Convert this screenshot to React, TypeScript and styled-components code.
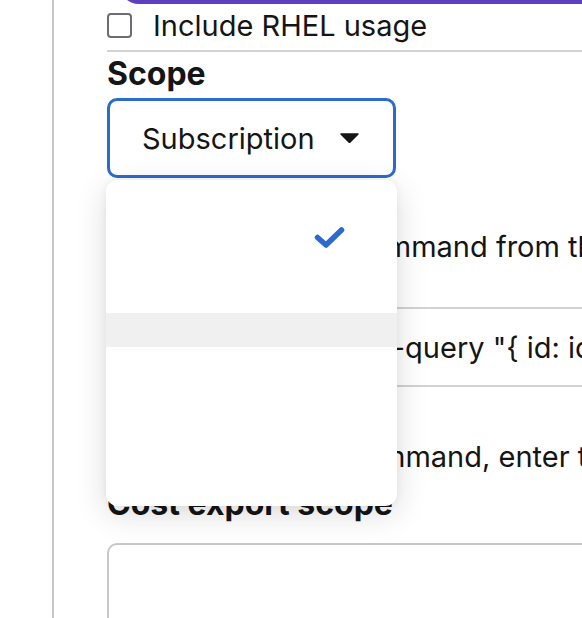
import React from 'react';
import styled, { createGlobalStyle } from 'styled-components';

const GlobalStyle = createGlobalStyle`
  html, body {
    margin: 0;
    padding: 0;
    background: #fff;
  }
  body {
    font-family: Inter, "Noto Sans", sans-serif;
    color: #151515;
    overflow: hidden;
  }
`;

const Page = styled.div`
  display: flex;
  height: 618px;
  overflow: hidden;
  background: #fff;
`;

const Rail = styled.div`
  flex: none;
  width: 52px;
  border-right: 2px solid #c7c7c7;
`;

const Main = styled.div`
  flex: 1;
  min-width: 0;
  padding-left: 53px;
`;

const Banner = styled.div`
  height: 24px;
  margin: -20px -40px 0 12px;
  background: #5e40be;
  border-radius: 0 0 0 20px;
`;

const CheckRow = styled.label`
  display: flex;
  align-items: center;
  gap: 21px;
  height: 43px;
  font-size: 29px;
  white-space: nowrap;
`;

const CheckBox = styled.span`
  box-sizing: border-box;
  width: 25px;
  height: 25px;
  border: 2px solid #6a6e73;
  border-radius: 4px;
  background: #fff;
`;

const Divider = styled.div`
  height: 2px;
  margin: 3px -40px 0 0;
  background: #d2d2d2;
`;

const Title = styled.h3<{ $top?: number }>`
  margin: ${(p) => p.$top ?? 0}px 0 0;
  font-size: 32px;
  font-weight: 700;
  line-height: 44px;
  white-space: nowrap;
`;

const SelectWrap = styled.div`
  position: relative;
  width: 289px;
  margin-top: 2px;
`;

const Toggle = styled.button`
  box-sizing: border-box;
  display: flex;
  align-items: center;
  gap: 25px;
  width: 289px;
  height: 80px;
  padding: 0 0 0 32px;
  border: 3px solid #2b6bd0;
  border-radius: 10px;
  background: #fff;
  color: #151515;
  font-family: inherit;
  font-size: 29px;
`;

const Menu = styled.ul`
  position: absolute;
  top: calc(100% + 2px);
  left: -1px;
  z-index: 2;
  box-sizing: border-box;
  width: 291px;
  height: 326px;
  margin: 0;
  padding: 24px 0 0;
  list-style: none;
  overflow: hidden;
  background: #fff;
  border-radius: 12px;
  box-shadow: 0 8px 32px rgba(3, 3, 3, 0.14), 0 0 8px rgba(3, 3, 3, 0.05);
`;

const MenuItem = styled.li<{ $height: number; $hover?: boolean }>`
  display: flex;
  align-items: center;
  justify-content: flex-end;
  height: ${(p) => p.$height}px;
  padding-right: 52px;
  background: ${(p) => (p.$hover ? '#f0f0f0' : 'transparent')};
`;

const Para = styled.p<{ $top: number }>`
  margin: ${(p) => p.$top}px 0 0;
  font-size: 29px;
  line-height: 42px;
  white-space: nowrap;
`;

const CopyBox = styled.div`
  box-sizing: border-box;
  display: flex;
  align-items: center;
  width: calc(100% + 60px);
  height: 80px;
  margin-top: 39px;
  padding-left: 29px;
  border: 2px solid #d2d2d2;
  border-radius: 4px;
  font-size: 29px;
  white-space: nowrap;
`;

const TextInput = styled.div`
  box-sizing: border-box;
  width: calc(100% + 40px);
  height: 100px;
  margin-top: 17px;
  border: 2px solid #c7c7c7;
  border-radius: 10px;
`;

const Caret = () => (
  <svg width="19" height="10" viewBox="0 0 19 10">
    <path d="M1 1 L18 1 L9.5 9.5 Z" fill="#151515" stroke="#151515" strokeWidth="1.5" strokeLinejoin="round" />
  </svg>
);

const Check = () => (
  <svg width="31" height="21" viewBox="0 0 31 21">
    <polyline
      points="3.5,10.5 12,18 27.5,3"
      fill="none"
      stroke="#2b6bd0"
      strokeWidth="5.5"
      strokeLinecap="round"
      strokeLinejoin="round"
    />
  </svg>
);

const App = () => (
  <Page>
    <GlobalStyle />
    <Rail />
    <Main>
      <Banner />
      <CheckRow>
        <CheckBox />
        Include RHEL usage
      </CheckRow>
      <Divider />
      <Title>Scope</Title>
      <SelectWrap>
        <Toggle type="button">
          Subscription
          <Caret />
        </Toggle>
        <Menu>
          <MenuItem $height={66}>
            <Check />
          </MenuItem>
          <MenuItem $height={43} />
          <MenuItem $height={34} $hover />
          <MenuItem $height={120} />
        </Menu>
      </SelectWrap>
      <Para $top={48}>Run the following command from the Azure Cloud Shell:</Para>
      <CopyBox>az account show --query &quot;{'{'} id: id {'}'}&quot;</CopyBox>
      <Para $top={49}>After running the command, enter the subscription ID below.</Para>
      <Title $top={4}>Cost export scope</Title>
      <TextInput />
    </Main>
  </Page>
);

export default App;
